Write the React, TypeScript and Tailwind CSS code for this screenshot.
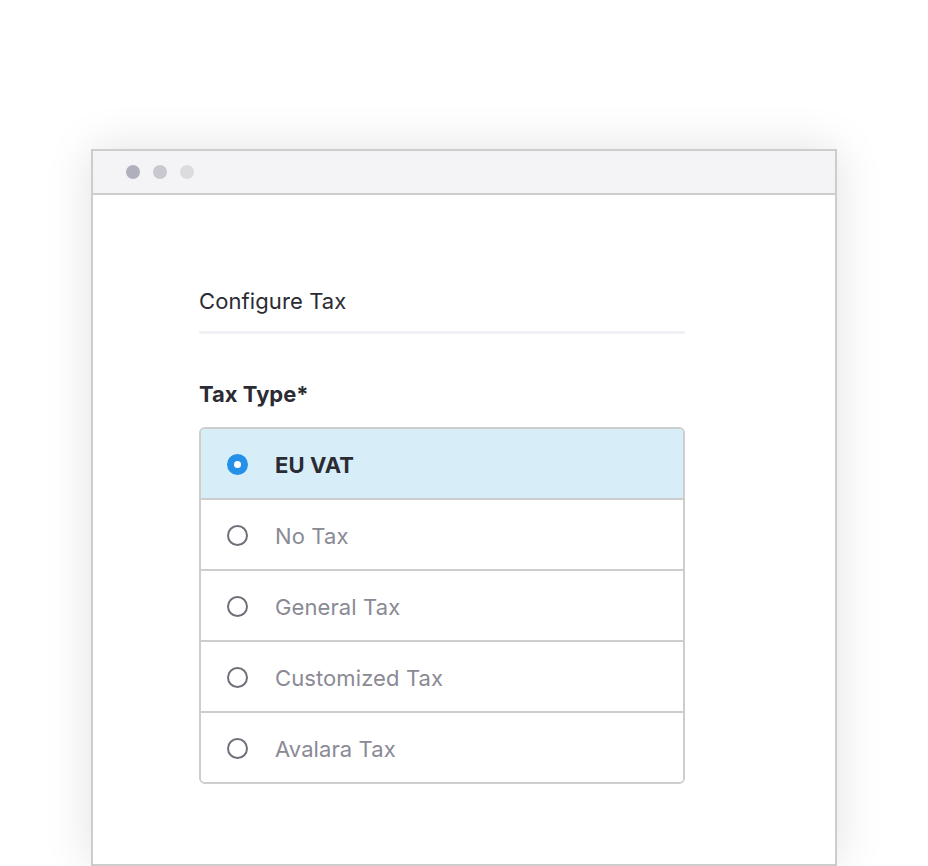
const options = ['EU VAT', 'No Tax', 'General Tax', 'Customized Tax', 'Avalara Tax']

function Radio({ checked }: { checked: boolean }) {
  if (checked) {
    return (
      <span className="flex h-[21px] w-[21px] items-center justify-center rounded-full bg-[#2490e8]">
        <span className="h-[7px] w-[7px] rounded-full bg-white" />
      </span>
    )
  }
  return <span className="h-[21px] w-[21px] rounded-full border-2 border-[#6f6f7a]" />
}

export default function App() {
  return (
    <div className="h-[866px] w-[928px] overflow-hidden bg-white font-['Inter',sans-serif]">
      <div className="ml-[91px] mt-[149px] h-[717px] w-[746px] border-2 border-[#cdcdcd] bg-white shadow-[0_0_44px_rgba(0,0,0,0.12)]">
        <div className="flex h-[44px] items-center gap-[13px] border-b-2 border-[#cdcdcd] bg-[#f4f4f6] pl-[33px]">
          <span className="h-[14px] w-[14px] rounded-full bg-[#b0b0bc]" />
          <span className="h-[14px] w-[14px] rounded-full bg-[#c8c8d0]" />
          <span className="h-[14px] w-[14px] rounded-full bg-[#dcdce0]" />
        </div>
        <div className="ml-[106px] w-[486px] pt-[92px]">
          <h1 className="text-[22px] tracking-[0.1px] leading-[28px] text-[#2b2b33]">Configure Tax</h1>
          <div className="mt-[16px] h-[3px] rounded-full bg-[#f0f1f4]" />
          <h2 className="mt-[46px] text-[22px] font-bold leading-[28px] text-[#2b2b33]">Tax Type*</h2>
          <div className="mt-[19px] overflow-hidden rounded-[6px] border-2 border-[#cdcdcd]">
            {options.map((o, i) => (
              <div
                key={o}
                className={
                  'flex items-center gap-[27px] pl-[26px] ' +
                  (i > 0 ? 'h-[71px] border-t-2 border-[#cdcdcd] bg-white pt-[2px]' : 'h-[69px] bg-[#d7eef9] pt-[2px]')
                }
              >
                <Radio checked={i === 0} />
                <span
                  className={
                    'text-[22px] leading-[28px] tracking-[0.1px] ' +
                    (i === 0 ? 'font-bold text-[#2b2b33]' : 'text-[#8a8a95]')
                  }
                >
                  {o}
                </span>
              </div>
            ))}
          </div>
        </div>
      </div>
    </div>
  )
}
